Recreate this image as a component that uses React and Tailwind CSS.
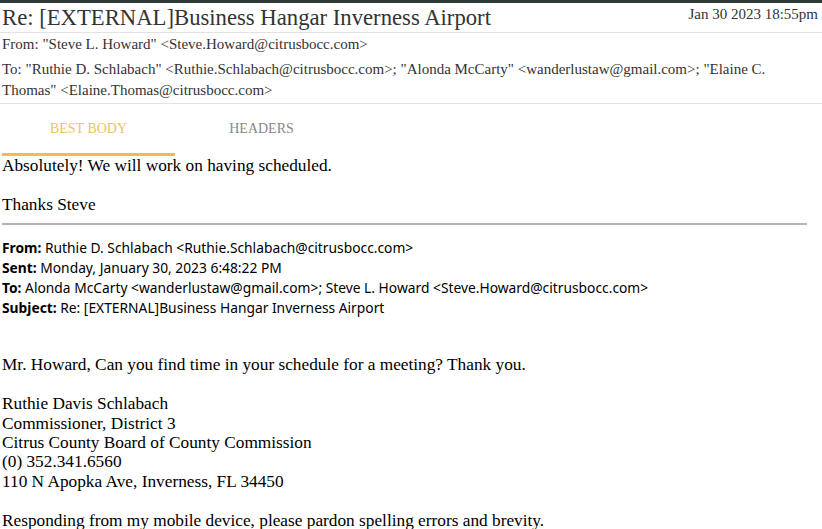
import React from 'react';

export default function App() {
  return (
    <div className="w-[822px] h-[529px] overflow-hidden bg-white text-[#333] font-['Liberation_Serif',serif] border-t-[3px] border-[#2e3a36]">
      {/* Header */}
      <div className="flex items-start justify-between pl-[2px] pr-[4px] pt-[3px] pb-[2px] border-b border-[#e3e3e3]">
        <h1 className="text-[22.7px] leading-[24px] text-[#333]">Re: [EXTERNAL]Business Hangar Inverness Airport</h1>
        <span className="text-[15px] leading-[16px] text-[#333]">Jan 30 2023 18:55pm</span>
      </div>
      <div className="pl-[2px] pr-[40px] pt-[1px] pb-[2.5px] text-[15px] leading-[21px] border-b border-[#e3e3e3]">
        <div>From: "Steve L. Howard" &lt;Steve.Howard@citrusbocc.com&gt;</div>
        <div className="mt-[3.5px]">
          To: "Ruthie D. Schlabach" &lt;Ruthie.Schlabach@citrusbocc.com&gt;; "Alonda McCarty" &lt;wanderlustaw@gmail.com&gt;; "Elaine C. Thomas" &lt;Elaine.Thomas@citrusbocc.com&gt;
        </div>
      </div>

      {/* Tabs */}
      <div className="flex pl-[2px]">
        <div className="w-[173px] h-[52px] pt-[17px] text-center text-[14px] leading-[16px] uppercase text-[#f4bf62] border-b-[3px] border-[#f4bb4a]">
          Best Body
        </div>
        <div className="w-[173px] h-[52px] pt-[17px] text-center text-[14px] leading-[16px] uppercase text-[#888]">
          Headers
        </div>
      </div>

      {/* Body */}
      <div className="pl-[2px] text-black text-[17.3px] leading-[19.4px]">
        <p>Absolutely! We will work on having scheduled.</p>
        <p className="mt-[19.4px]">Thanks Steve</p>
        <div className="mt-[9px] mr-[15px] h-[2px] bg-[#b3b3b3]"></div>

        <div className="mt-[13px] text-[13.8px] leading-[19.8px] text-black font-['Noto_Sans',sans-serif]">
          <div><b>From:</b> Ruthie D. Schlabach &lt;Ruthie.Schlabach@citrusbocc.com&gt;</div>
          <div><b>Sent:</b> Monday, January 30, 2023 6:48:22 PM</div>
          <div><b>To:</b> Alonda McCarty &lt;wanderlustaw@gmail.com&gt;; Steve L. Howard &lt;Steve.Howard@citrusbocc.com&gt;</div>
          <div><b>Subject:</b> Re: [EXTERNAL]Business Hangar Inverness Airport</div>
        </div>

        <div className="mt-[38px]">
          <p>Mr. Howard, Can you find time in your schedule for a meeting? Thank you.</p>
          <p className="mt-[19.4px]">Ruthie Davis Schlabach</p>
          <p>Commissioner, District 3</p>
          <p>Citrus County Board of County Commission</p>
          <p>(0) 352.341.6560</p>
          <p>110 N Apopka Ave, Inverness, FL 34450</p>
          <p className="mt-[19.4px]">Responding from my mobile device, please pardon spelling errors and brevity.</p>
        </div>
      </div>
    </div>
  );
}
